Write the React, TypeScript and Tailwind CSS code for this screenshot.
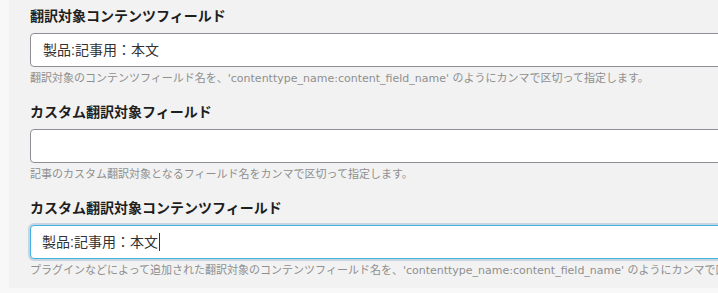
import React from 'react';

const fields = [
  {
    label: '翻訳対象コンテンツフィールド',
    value: '製品:記事用：本文',
    help: "翻訳対象のコンテンツフィールド名を、'contenttype_name:content_field_name' のようにカンマで区切って指定します。",
    focused: false,
  },
  {
    label: 'カスタム翻訳対象フィールド',
    value: '',
    help: '記事のカスタム翻訳対象となるフィールド名をカンマで区切って指定します。',
    focused: false,
  },
  {
    label: 'カスタム翻訳対象コンテンツフィールド',
    value: '製品:記事用：本文',
    help: "プラグインなどによって追加された翻訳対象のコンテンツフィールド名を、'contenttype_name:content_field_name' のようにカンマで区切って指定します。",
    focused: true,
  },
];

export default function App() {
  return (
    <div
      className="flex h-[293px] w-[718px] overflow-hidden bg-[#f8f8f8]"
      style={{ fontFamily: '"Liberation Sans", "Noto Sans CJK JP", sans-serif' }}
    >
      <div className="ml-[9px] h-[288px] flex-1 overflow-hidden bg-[#f2f2f2] pl-[21px] pt-[6px]">
        {fields.map((f) => (
          <div key={f.label} className="mb-[15px]">
            <div className="h-[20px] whitespace-nowrap text-[14px] font-bold leading-[20px] text-[#1e1e1e]">
              {f.label}
            </div>
            <div
              className={
                f.focused
                  ? 'mt-[7px] flex h-[34px] w-[760px] items-center rounded-[4px] border-[1.5px] border-[#3fb3e4] bg-white pl-[11px] text-[14px] text-[#333] shadow-[0_0_0_2px_#c8d4e0]'
                  : 'mt-[7px] flex h-[34px] w-[760px] items-center rounded-[4px] border border-[#8c8f94] bg-white pl-[12px] text-[14px] text-[#333]'
              }
            >
              <span className="whitespace-nowrap">{f.value}</span>
              {f.focused && <span className="ml-[1px] h-[18px] w-px bg-[#333]" />}
            </div>
            <div
              className="mt-[4px] h-[16px] whitespace-nowrap text-[11px] leading-[16px] text-[#8f8f8f]"
              style={{ fontFamily: '"DejaVu Sans", "Noto Sans CJK JP", sans-serif' }}
            >
              {f.help}
            </div>
          </div>
        ))}
      </div>
    </div>
  );
}
